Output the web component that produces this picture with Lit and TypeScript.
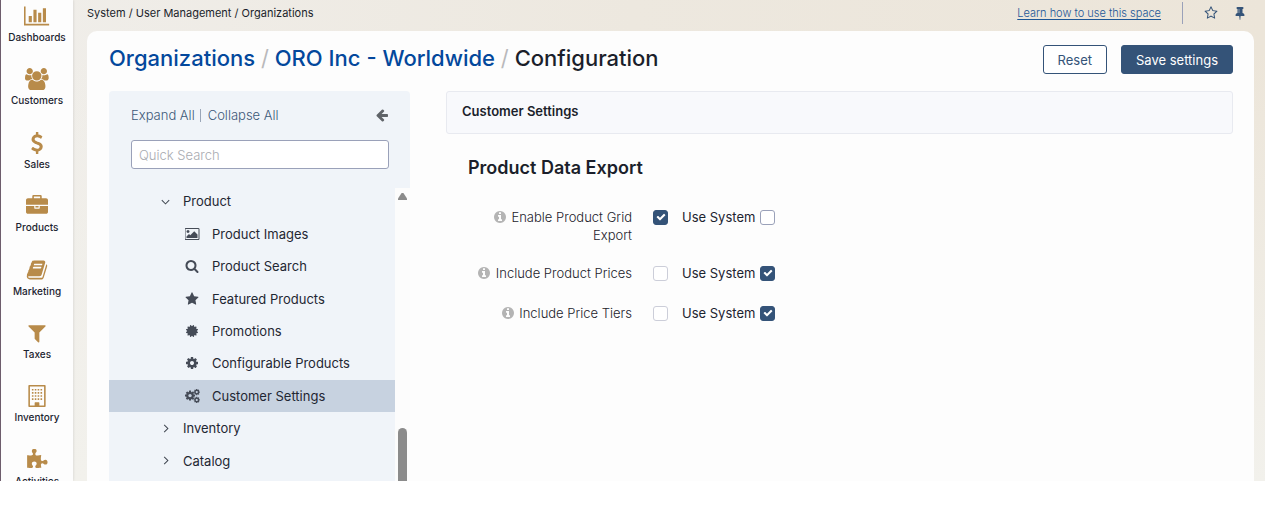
import { LitElement, html, css, svg, nothing } from "lit";
import { customElement, property, state } from "lit/decorators.js";
import { classMap } from "lit/directives/class-map.js";

const COG =
  "M1152 896q0-106-75-181t-181-75-181 75-75 181 75 181 181 75 181-75 75-181zm512-109v222q0 12-8 23t-20 13l-185 28q-19 54-39 91 35 50 107 138 10 12 10 25t-9 23q-27 37-99 108t-94 71q-12 0-26-9l-138-108q-44 23-91 38-16 136-29 186-7 28-36 28h-222q-14 0-24.5-8.5t-11.5-21.5l-28-184q-49-16-90-37l-141 107q-10 9-25 9-14 0-25-11-126-114-165-168-7-10-7-23 0-12 8-23 15-21 51-66.5t54-70.5q-27-50-41-99l-183-27q-13-2-21-12.5t-8-23.5v-222q0-12 8-23t19-13l186-28q14-46 39-92-40-57-107-138-10-12-10-24 0-10 9-23 26-36 98.5-107.5t94.5-71.5q13 0 26 10l138 107q44-23 91-38 16-136 29-186 7-28 36-28h222q14 0 24.5 8.5t11.5 21.5l28 184q49 16 90 37l142-107q9-9 24-9 13 0 25 10 129 119 165 170 7 8 7 22 0 12-8 23-15 21-51 66.5t-54 70.5q26 50 41 98l183 28q13 2 21 12.5t8 23.5z";

interface Glyph {
  width: number;
  paths: { d: string; transform?: string }[];
}

const one = (d: string, width = 1792): Glyph => ({ width, paths: [{ d }] });

const windows = [320, 576, 832, 1088]
  .map((y) => [480, 715, 949, 1184].map((x) => `M${x} ${y}h128v128h-128z`).join(""))
  .join("");

const GLYPHS: Record<string, Glyph> = {
  chart: one(
    "M640 896v512h-256v-512h256zm384-512v1024h-256v-1024h256zm1024 1152v128h-2048v-1536h128v1408h1920zm-640-896v768h-256v-768h256zm384-384v1152h-256v-1152h256z",
    2048
  ),
  users: one(
    "M593 896q-162 5-265 128h-134q-82 0-138-40.5t-56-118.5q0-353 124-353 6 0 43.5 21t97.5 42.5 119 21.5q67 0 133-23-5 37-5 66 0 159 93 256zm1071 637q0 120-73 189.5t-194 69.5h-874q-121 0-194-69.5t-73-189.5q0-53 3.5-103.5t14-109 26.5-108.5 43-97.5 62-81 85.5-53.5 111.5-20q10 0 43 21.5t73 48 107 48 135 21.5 135-21.5 107-48 73-48 43-21.5q61 0 111.5 20t85.5 53.5 62 81 43 97.5 26.5 108.5 14 109 3.5 103.5zm-1024-1277q0 106-75 181t-181 75-181-75-75-181 75-181 181-75 181 75 75 181zm704 384q0 159-112.5 271.5t-271.5 112.5-271.5-112.5-112.5-271.5 112.5-271.5 271.5-112.5 271.5 112.5 112.5 271.5zm576 225q0 78-56 118.5t-138 40.5h-134q-103-123-265-128 93-97 93-256 0-29-5-66 66 23 133 23 59 0 119-21.5t97.5-42.5 43.5-21q124 0 124 353zm-128-609q0 106-75 181t-181 75-181-75-75-181 75-181 181-75 181 75 75 181z",
    1920
  ),
  dollar: one(
    "M1362 1185q0 153-99.5 263.5t-258.5 136.5v175q0 14-9 23t-23 9h-135q-13 0-22.5-9.5t-9.5-22.5v-175q-66-9-127.5-31t-101.5-44.5-74-48-46.5-37.5-17.5-18q-17-21-2-41l103-135q7-10 23-12 15-2 24 9l2 2q113 99 243 125 37 8 74 8 81 0 142.5-43t61.5-122q0-28-15-53t-33.5-42-58.5-37.5-66-32-80-32.5q-39-16-61.5-25t-61.5-26.5-62.5-31-56.5-35.5-53.5-42.5-43.5-49-35.5-58-21-66.5-8.5-78q0-138 98-242t255-134v-180q0-13 9.5-22.5t22.5-9.5h135q14 0 23 9t9 23v176q57 6 110.5 23t87 33.5 63.5 37.5 39 29 15 14q17 18 5 38l-81 146q-8 15-23 16-14 3-27-7-3-3-14.5-12t-39-26.5-58.5-32-74.5-26-85.5-11.5q-95 0-155 43t-60 111q0 26 8.5 48t29.5 41.5 39.5 33 56 31 60.5 27 70 27.5q53 20 81 31.5t76 35 75.5 42.5 62 50 53 63.5 31.5 76.5 13 94z"
  ),
  briefcase: one(
    "M640 256h512v-128h-512v128zm1152 640v480q0 66-47 113t-113 47h-1472q-66 0-113-47t-47-113v-480h672v160q0 26 19 45t45 19h320q26 0 45-19t19-45v-160h672zm-768 0v128h-256v-128h256zm768-480v384h-1792v-384q0-66 47-113t113-47h352v-160q0-40 28-68t68-28h576q40 0 68 28t28 68v160h352q66 0 113 47t47 113z"
  ),
  book: one(
    "M1703 478q40 57 18 129l-275 906q-19 64-76.5 107.5t-122.5 43.5h-923q-77 0-148.5-53.5t-99.5-131.5q-24-67-2-127 0-4 3-27t4-37q1-8-3-21.5t-3-19.5q2-11 8-21t16.5-23.5 16.5-23.5q23-38 45-91.5t30-91.5q3-10 .5-30t-.5-28q3-11 17-28t17-23q21-36 42-92t25-90q1-9-2.5-32t.5-28q4-13 22-30.5t22-22.5q19-26 42.5-84.5t27.5-96.5q1-8-3-25.5t-2-26.5q2-8 9-18t18-23 17-21q8-12 16.5-30.5t15-35 16-36 19.5-32 26.5-23.5 36-11.5 47.5 5.5l-1 3q38-9 51-9h761q74 0 114 56t18 130l-274 906q-36 119-71.5 153.5t-128.5 34.5h-869q-27 0-38 15-11 16-1 43 24 70 144 70h923q29 0 56-15.5t35-41.5l300-987q7-22 5-57 38 15 59 43zm-1064 2q-4 13 2 22.5t20 9.5h608q13 0 25.5-9.5t16.5-22.5l21-64q4-13-2-22.5t-20-9.5h-608q-13 0-25.5 9.5t-16.5 22.5zm-83 256q-4 13 2 22.5t20 9.5h608q13 0 25.5-9.5t16.5-22.5l21-64q4-13-2-22.5t-20-9.5h-608q-13 0-25.5 9.5t-16.5 22.5z"
  ),
  filter: one(
    "M1595 295q17 41-14 70l-493 493v742q0 42-39 59-13 5-25 5-27 0-45-19l-256-256q-19-19-19-45v-486l-493-493q-31-29-14-70 17-39 59-39h1280q42 0 59 39z"
  ),
  building: one(
    "M256 0h1280q64 0 64 64v1664q0 64-64 64h-1280q-64 0-64-64v-1664q0-64 64-64zM320 128v1536h384v-224q0-32 32-32h320q32 0 32 32v224h384v-1536z" +
      windows
  ),
  puzzle: one(
    "M1755 1083q0 81-44.5 135t-123.5 54q-41 0-77.5-17.5t-59-38-56.5-38-71-17.5q-110 0-110 124 0 39 16 115t15 115v5q-22 0-33 1-34 3-97.5 11.5t-115.5 13.5-98 5q-61 0-103-26.5t-42-83.5q0-37 17.5-71t38-56.5 38-59 17.5-77.5q0-79-54-123.5t-135-44.5q-84 0-143 45.5t-59 127.5q0 43 15 83t33.5 64.5 33.5 53 15 50.5q0 45-46 89-37 35-117 35-95 0-245-24-9-2-27.5-4t-27.5-4l-13-2q-1 0-3-1-2 0-2-1v-1024q2 1 17.5 3.5t34 5 21.5 3.5q150 24 245 24 80 0 117-35 46-44 46-89 0-22-15-50.5t-33.5-53-33.5-64.5-15-83q0-82 59-127.5t144-45.5q80 0 134 44.5t54 123.5q0 41-17.5 77.5t-38 59-38 56.5-17.5 71q0 57 42 83.5t103 26.5q64 0 180-15t163-17v2q-1 2-3.5 17.5t-5 34-3.5 21.5q-24 150-24 245 0 80 35 117 44 46 89 46 22 0 50.5-15t53-33.5 64.5-33.5 83-15q82 0 127.5 59t45.5 143z"
  ),
  image: one(
    "M576 576q0 80-56 136t-136 56-136-56-56-136 56-136 136-56 136 56 56 136zm1024 384v448h-1408v-192l320-320 160 160 512-512zm96-704h-1600q-13 0-22.5 9.5t-9.5 22.5v1216q0 13 9.5 22.5t22.5 9.5h1600q13 0 22.5-9.5t9.5-22.5v-1216q0-13-9.5-22.5t-22.5-9.5zm160 32v1216q0 66-47 113t-113 47h-1600q-66 0-113-47t-47-113v-1216q0-66 47-113t113-47h1600q66 0 113 47t47 113z",
    1920
  ),
  search: one(
    "M1216 832q0-185-131.5-316.5t-316.5-131.5-316.5 131.5-131.5 316.5 131.5 316.5 316.5 131.5 316.5-131.5 131.5-316.5zm512 832q0 52-38 90t-90 38q-54 0-90-38l-343-342q-179 124-399 124-143 0-273.5-55.5t-225-150-150-225-55.5-273.5 55.5-273.5 150-225 225-150 273.5-55.5 273.5 55.5 225 150 150 225 55.5 273.5q0 220-124 399l343 343q37 37 37 90z"
  ),
  star: one(
    "M1728 647q0 22-26 48l-363 354 86 500q1 7 1 20 0 21-10.5 35.5t-30.5 14.5q-19 0-40-12l-449-236-449 236q-22 12-40 12-21 0-31.5-14.5t-10.5-35.5q0-6 2-20l86-500-364-354q-25-27-25-48 0-37 56-46l502-73 225-455q19-41 49-41t49 41l225 455 502 73q56 9 56 46z"
  ),
  starOutline: one(
    "M1201 1004l306-297-422-62-189-382-189 382-422 62 306 297-73 421 378-199 377 199zm527-357q0 22-26 48l-363 354 86 500q1 7 1 20 0 50-41 50-19 0-40-12l-449-236-449 236q-22 12-40 12-21 0-31.5-14.5t-10.5-35.5q0-6 2-20l86-500-364-354q-25-27-25-48 0-37 56-46l502-73 225-455q19-41 49-41t49 41l225 455 502 73q56 9 56 46z"
  ),
  certificate: one(
    "M1504 896l138 135q30 28 20 70-12 41-52 51l-188 48 53 186q12 41-19 70-29 31-70 19l-186-53-48 188q-10 40-51 52-12 2-19 2-31 0-51-22l-135-138-135 138q-28 30-70 20-41-11-51-52l-48-188-186 53q-41 12-70-19-31-29-19-70l53-186-188-48q-40-10-52-51-10-42 20-70l138-135-138-135q-30-28-20-70 12-41 52-51l188-48-53-186q-12-41 19-70 29-31 70-19l186 53 48-188q10-41 51-51 41-12 70 19l135 139 135-139q29-30 70-19 41 10 51 51l48 188 186-53q41-12 70 19 31 29 19 70l-53 186 188 48q40 10 52 51 10 42-20 70z"
  ),
  cog: one(COG),
  cogs: {
    width: 1920,
    paths: [
      { d: COG, transform: "translate(-108 90) scale(.84)" },
      { d: COG, transform: "translate(1040 -70) scale(.52)" },
      { d: COG, transform: "translate(1040 930) scale(.52)" },
    ],
  },
  pin: one(
    "M800 864v-448q0-14-9-23t-23-9-23 9-9 23v448q0 14 9 23t23 9 23-9 9-23zm672 352q0 26-19 45t-45 19h-429l-51 483q-2 12-10.5 20.5t-20.5 8.5h-1q-27 0-32-27l-76-485h-404q-26 0-45-19t-19-45q0-123 78.5-221.5t177.5-98.5v-512q-52 0-90-38t-38-90 38-90 90-38h640q52 0 90 38t38 90-38 90-90 38v512q99 0 177.5 98.5t78.5 221.5z"
  ),
  info: one(
    "M1152 1376v-160q0-14-9-23t-23-9h-96v-512q0-14-9-23t-23-9h-320q-14 0-23 9t-9 23v160q0 14 9 23t23 9h96v320h-96q-14 0-23 9t-9 23v160q0 14 9 23t23 9h448q14 0 23-9t9-23zm-128-896v-160q0-14-9-23t-23-9h-192q-14 0-23 9t-9 23v160q0 14 9 23t23 9h192q14 0 23-9t9-23zm640 416q0 209-103 385.5t-279.5 279.5-385.5 103-385.5-103-279.5-279.5-103-385.5 103-385.5 279.5-279.5 385.5-103 385.5 103 279.5 279.5 103 385.5z"
  ),
  check: one(
    "M1671 566q0 40-28 68l-724 724-136 136q-28 28-68 28t-68-28l-136-136-362-362q-28-28-28-68t28-68l136-136q28-28 68-28t68 28l294 295 656-657q28-28 68-28t68 28l136 136q28 28 28 68z"
  ),
  back: one(
    "M1664 896v128q0 53-32.5 90.5t-84.5 37.5h-704l293 294q38 36 38 90t-38 90l-75 76q-37 37-90 37-52 0-91-37l-651-652q-37-37-37-90 0-52 37-91l651-650q38-38 91-38 52 0 90 38l75 74q38 38 38 91t-38 91l-293 293h704q52 0 84.5 37.5t32.5 90.5z"
  ),
  down: one("M230 560l666 666 666-666 140 140-806 806-806-806z"),
  right: one("M560 230l666 666-666 666 140 140 806-806-806-806z"),
};

@customElement("ui-icon")
class UiIcon extends LitElement {
  @property() name = "";

  static styles = css`
    :host {
      display: inline-flex;
      height: 14px;
      flex: none;
    }
    svg {
      display: block;
      height: 100%;
      width: auto;
      fill: currentColor;
      fill-rule: evenodd;
    }
  `;

  render() {
    const glyph = GLYPHS[this.name];
    if (!glyph) return nothing;
    return html`<svg viewBox="0 0 ${glyph.width} 1792" aria-hidden="true">
      ${glyph.paths.map((p) => svg`<path d=${p.d} transform=${p.transform ?? nothing}></path>`)}
    </svg>`;
  }
}

@customElement("main-menu")
class MainMenu extends LitElement {
  static styles = css`
    :host {
      display: block;
      overflow: hidden;
      background: #fdfdfd;
      border-left: 1px solid #6d5d6c;
      box-shadow: 0 0 3px rgba(0, 0, 0, 0.14);
    }
    nav {
      display: grid;
      grid-auto-rows: 1fr;
      height: 507px;
    }
    a {
      display: flex;
      flex-direction: column;
      align-items: center;
      gap: 3px;
      padding-top: 5px;
      color: #1c2430;
      text-decoration: none;
      font-size: 10px;
      line-height: 14px;
      font-weight: 500;
    }
    ui-icon {
      height: 22px;
      color: #b88b4a;
    }
  `;

  private items = [
    ["chart", "Dashboards"],
    ["users", "Customers"],
    ["dollar", "Sales"],
    ["briefcase", "Products"],
    ["book", "Marketing"],
    ["filter", "Taxes"],
    ["building", "Inventory"],
    ["puzzle", "Activities"],
  ];

  render() {
    return html`<nav>
      ${this.items.map(([icon, label]) => html`<a href="#"><ui-icon name=${icon}></ui-icon>${label}</a>`)}
    </nav>`;
  }
}

@customElement("config-tree")
class ConfigTree extends LitElement {
  @state() private active = "Customer Settings";

  static styles = css`
    :host {
      display: flex;
      flex-direction: column;
      width: 301px;
      flex: none;
      overflow: hidden;
      background: #f0f4f9;
      border-radius: 4px 4px 0 0;
    }
    .head {
      display: grid;
      gap: 16px;
      padding: 15px 21px 16px 22px;
    }
    .tools {
      display: flex;
      align-items: center;
      height: 18px;
      color: #3c5878;
    }
    button {
      padding: 0;
      border: 0;
      background: none;
      color: inherit;
      font: inherit;
      cursor: pointer;
    }
    .tools button + button {
      margin-left: 5px;
      padding-left: 7px;
      border-left: 1px solid #9aa6b8;
      line-height: 13px;
    }
    .tools .back {
      display: flex;
      margin-left: auto;
      padding: 0;
      border: 0;
      color: #5f6368;
    }
    input {
      box-sizing: border-box;
      width: 100%;
      height: 29px;
      padding: 0 7px;
      border: 1px solid #9aa1b9;
      border-radius: 3px;
      background: #fff;
      color: #1c2430;
      font: inherit;
    }
    input::placeholder {
      color: #a9abb1;
      opacity: 1;
    }
    .body {
      display: flex;
      flex: 1;
      min-height: 0;
    }
    .tree {
      display: grid;
      grid-auto-rows: 1fr;
      flex: 1;
      height: 292px;
      margin: 0;
      padding: 0;
      list-style: none;
    }
    a {
      display: flex;
      align-items: center;
      box-sizing: border-box;
      height: 100%;
      padding-left: 48px;
      color: #1f2733;
      text-decoration: none;
      font-weight: 400;
    }
    .marker {
      display: flex;
      justify-content: center;
      width: 16px;
      margin-right: 10px;
      color: #3f4650;
    }
    .group ui-icon {
      height: 9px;
    }
    .child {
      padding-left: 75px;
    }
    .child .marker {
      margin-right: 12px;
      color: #454b57;
    }
    .active {
      background: #c7d2e0;
    }
    .scroll {
      display: flex;
      flex-direction: column;
      justify-content: space-between;
      align-items: center;
      width: 15px;
      margin-top: 3px;
      background: #fcfcfc;
    }
    .up {
      width: 9px;
      height: 7px;
      margin-top: 5px;
      background: #8b8b8b;
      clip-path: polygon(40% 0, 60% 0, 100% 80%, 100% 100%, 0 100%, 0 80%);
    }
    .thumb {
      width: 9px;
      height: 53px;
      border-radius: 5px 5px 0 0;
      background: #8b8b8b;
    }
  `;

  private nodes = [
    { icon: "down", label: "Product", group: true },
    { icon: "image", label: "Product Images" },
    { icon: "search", label: "Product Search" },
    { icon: "star", label: "Featured Products" },
    { icon: "certificate", label: "Promotions" },
    { icon: "cog", label: "Configurable Products" },
    { icon: "cogs", label: "Customer Settings" },
    { icon: "right", label: "Inventory", group: true },
    { icon: "right", label: "Catalog", group: true },
  ];

  render() {
    return html`
      <div class="head">
        <div class="tools">
          <button type="button">Expand All</button>
          <button type="button">Collapse All</button>
          <button type="button" class="back" aria-label="Hide panel"><ui-icon name="back"></ui-icon></button>
        </div>
        <input type="search" placeholder="Quick Search" aria-label="Quick Search" />
      </div>
      <div class="body">
        <ul class="tree">
          ${this.nodes.map(
            (n) => html`<li>
              <a
                href="#"
                class=${classMap({ group: !!n.group, child: !n.group, active: n.label === this.active })}
                @click=${(e: Event) => {
                  e.preventDefault();
                  this.active = n.label;
                }}
                ><span class="marker"><ui-icon name=${n.icon}></ui-icon></span>${n.label}</a
              >
            </li>`
          )}
        </ul>
        <div class="scroll"><span class="up"></span><span class="thumb"></span></div>
      </div>
    `;
  }
}

@customElement("tick-box")
class TickBox extends LitElement {
  @property({ type: Boolean }) checked = false;
  @property({ type: Boolean }) muted = false;
  @property() label = "";
  @property({ type: Boolean }) caption = false;

  static styles = css`
    :host {
      display: block;
    }
    label {
      display: flex;
      align-items: center;
      gap: 5px;
      min-height: 18px;
      line-height: 18px;
      color: #1c2430;
      font-weight: 400;
      cursor: pointer;
    }
    .box {
      display: grid;
      place-items: center;
    }
    .box > * {
      grid-area: 1 / 1;
    }
    input {
      appearance: none;
      box-sizing: border-box;
      width: 15px;
      height: 15px;
      margin: 0;
      border: 1px solid #9aa1b9;
      border-radius: 3px;
      background: #fff;
    }
    .muted {
      border-color: #ccced9;
    }
    input:checked {
      border-color: #345378;
      background: #345378;
    }
    ui-icon {
      height: 10px;
      color: #fff;
      pointer-events: none;
    }
  `;

  render() {
    return html`<label>
      ${this.caption ? this.label : nothing}
      <span class="box">
        <input
          type="checkbox"
          class=${classMap({ muted: this.muted })}
          aria-label=${this.label}
          .checked=${this.checked}
          @change=${(e: Event) => (this.checked = (e.target as HTMLInputElement).checked)}
        />
        ${this.checked ? html`<ui-icon name="check"></ui-icon>` : nothing}
      </span>
    </label>`;
  }
}

@customElement("app-root")
class AppRoot extends LitElement {
  static styles = css`
    :host {
      display: block;
      min-height: 100vh;
      background: #fff;
      color: #1b1f2b;
      font-family: Inter, "Noto Sans", sans-serif;
      font-size: 13px;
      font-weight: 300;
    }
    .shell {
      display: grid;
      grid-template-columns: 73px 1fr;
      height: calc(100vh - 35px);
      overflow: hidden;
      background: linear-gradient(180deg, rgba(242, 241, 236, 0) 10%, #f2f1ec 100%),
        linear-gradient(90deg, #f0eeea, #ede8df 50%, #ece5d9);
    }
    .main {
      display: flex;
      flex-direction: column;
      min-width: 0;
      min-height: 0;
      padding: 0 11px 0 14px;
    }
    .top {
      display: flex;
      align-items: center;
      height: 26px;
      margin-bottom: 5px;
      font-size: 11px;
      font-weight: 400;
    }
    .top a {
      margin-left: auto;
      color: #1c5797;
      font-weight: 300;
      text-underline-offset: 2px;
    }
    .rule {
      width: 1px;
      height: 22px;
      margin: 0 21px;
      background: #9aa1b9;
    }
    .top button {
      display: flex;
      padding: 0;
      border: 0;
      background: none;
      color: #345378;
    }
    .top button + button {
      margin: 0 7px 0 15px;
    }
    .card {
      display: flex;
      flex: 1;
      flex-direction: column;
      gap: 17px;
      min-height: 0;
      padding: 14px 21px 0 22px;
      border-radius: 10px 10px 0 0;
      background: #fdfdfd;
    }
    .title {
      display: flex;
      align-items: flex-start;
      gap: 14px;
      height: 29px;
    }
    h1 {
      flex: 1;
      margin: 0;
      font-size: 22px;
      line-height: 26px;
      font-weight: 500;
    }
    h1 a {
      color: #03489c;
      text-decoration: none;
    }
    h1 span {
      color: #b9b9bb;
      font-weight: 400;
    }
    .btn {
      height: 29px;
      padding: 0 14px;
      border: 1px solid #345378;
      border-radius: 3px;
      background: #fff;
      color: #345378;
      font: inherit;
      font-weight: 400;
    }
    .primary {
      background: #345378;
      color: #fff;
    }
    .columns {
      display: flex;
      flex: 1;
      gap: 36px;
      min-height: 0;
    }
    .content {
      flex: 1;
      min-width: 0;
    }
    h2 {
      margin: 0;
      padding: 10px 15px 13px;
      border: 1px solid #e8eaf0;
      border-radius: 3px;
      background: #f8f9fc;
      font-size: 13px;
      line-height: 18px;
      font-weight: 600;
    }
    h3 {
      margin: 22px 22px 28px;
      font-size: 18px;
      line-height: 24px;
      font-weight: 600;
    }
    .fields {
      display: grid;
      gap: 20px;
    }
    .field {
      display: grid;
      grid-template-columns: 186px auto 1fr;
      align-items: start;
      min-height: 20px;
      line-height: 18px;
    }
    .name {
      padding-left: 26px;
      text-align: right;
      color: #1c222b;
    }
    .name ui-icon {
      height: 14px;
      margin-right: 1px;
      vertical-align: -2px;
      color: #b4b4b4;
    }
    .field tick-box {
      margin-left: 21px;
    }
    .field tick-box + tick-box {
      margin-left: 14px;
    }
  `;

  private fields = [
    { label: "Enable Product Grid Export", on: true, system: false },
    { label: "Include Product Prices", on: false, system: true },
    { label: "Include Price Tiers", on: false, system: true },
  ];

  render() {
    return html`
      <div class="shell">
        <main-menu></main-menu>
        <div class="main">
          <div class="top">
            <span>System / User Management / Organizations</span>
            <a href="#">Learn how to use this space</a>
            <i class="rule"></i>
            <button type="button" aria-label="Favorite"><ui-icon name="starOutline"></ui-icon></button>
            <button type="button" aria-label="Pin"><ui-icon name="pin"></ui-icon></button>
          </div>
          <main class="card">
            <div class="title">
              <h1>
                <a href="#">Organizations</a> <span>/</span> <a href="#">ORO Inc - Worldwide</a> <span>/</span>
                Configuration
              </h1>
              <button type="button" class="btn">Reset</button>
              <button type="button" class="btn primary">Save settings</button>
            </div>
            <div class="columns">
              <config-tree></config-tree>
              <section class="content">
                <h2>Customer Settings</h2>
                <h3>Product Data Export</h3>
                <div class="fields">
                  ${this.fields.map(
                    (f) => html`<div class="field">
                      <span class="name"><ui-icon name="info"></ui-icon> ${f.label}</span>
                      <tick-box label=${f.label} ?checked=${f.on} ?muted=${!f.on}></tick-box>
                      <tick-box label="Use System" caption ?checked=${f.system}></tick-box>
                    </div>`
                  )}
                </div>
              </section>
            </div>
          </main>
        </div>
      </div>
    `;
  }
}
